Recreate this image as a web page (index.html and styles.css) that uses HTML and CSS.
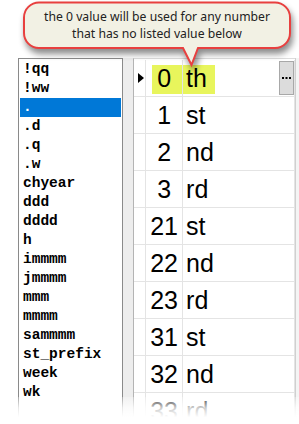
FILE: index.html
```html
<!DOCTYPE html>
<html lang="en">
<head>
  <meta charset="UTF-8">
  <title>Ordinal suffixes</title>
  <link rel="stylesheet" href="styles.css">
</head>
<body>
  <div class="shot">
    <div class="panes">
      <ul class="keys">
        <li>!qq</li>
        <li>!ww</li>
        <li class="selected">.</li>
        <li>.d</li>
        <li>.q</li>
        <li>.w</li>
        <li>chyear</li>
        <li>ddd</li>
        <li>dddd</li>
        <li>h</li>
        <li>immmm</li>
        <li>jmmmm</li>
        <li>mmm</li>
        <li>mmmm</li>
        <li>sammmm</li>
        <li>st_prefix</li>
        <li>week</li>
        <li>wk</li>
      </ul>
      <div class="splitter"></div>
      <div class="grid">
        <div class="row current">
          <div class="mark"></div>
          <div class="head"><span class="arrow"></span></div>
          <div class="num">0</div>
          <div class="val">th<span class="more"><svg width="9" height="2" viewBox="0 0 9 2"><rect x="0" y="0" width="2" height="2"/><rect x="3.5" y="0" width="2" height="2"/><rect x="7" y="0" width="2" height="2"/></svg></span></div>
        </div>
        <div class="row"><div class="head"></div><div class="num">1</div><div class="val">st</div></div>
        <div class="row"><div class="head"></div><div class="num">2</div><div class="val">nd</div></div>
        <div class="row"><div class="head"></div><div class="num">3</div><div class="val">rd</div></div>
        <div class="row"><div class="head"></div><div class="num">21</div><div class="val">st</div></div>
        <div class="row"><div class="head"></div><div class="num">22</div><div class="val">nd</div></div>
        <div class="row"><div class="head"></div><div class="num">23</div><div class="val">rd</div></div>
        <div class="row"><div class="head"></div><div class="num">31</div><div class="val">st</div></div>
        <div class="row"><div class="head"></div><div class="num">32</div><div class="val">nd</div></div>
        <div class="row"><div class="head"></div><div class="num">33</div><div class="val">rd</div></div>
      </div>
      <div class="edge"></div>
    </div>

    <div class="callout">
      <svg class="bubble" width="299" height="72" viewBox="0 0 299 72">
        <path d="M39,2.5 H275 A15,15 0 0 1 290,17.5 V33 A15,15 0 0 1 275,48 H198 L191.5,65 L183,48 H39 A15,15 0 0 1 24,33 V17.5 A15,15 0 0 1 39,2.5 Z"/>
      </svg>
      <p class="tip">the 0 value will be used for any number<br>that has no listed value below</p>
    </div>

    <div class="fade"></div>
  </div>
</body>
</html>
```

FILE: styles.css
```css
body { margin: 0; background: #fff; }
.shot { position: relative; width: 299px; height: 424px; overflow: hidden; background: #fff; }

.panes { display: flex; padding: 58px 0 0 18px; height: 366px; }

.keys { list-style: none; margin: 0; padding: 1px; width: 104px; border: 1px solid #8a8a8a; background: #fff;
  font-family: "Liberation Mono", monospace; font-weight: bold; font-size: 14.5px; color: #000; }
.keys li { height: 19px; line-height: 19px; padding-left: 3px; white-space: pre; }
.keys li.selected { background: #0078d7; color: #fff; }

.splitter { width: 10px; background: #ededed; }

.grid { width: 161px; padding-top: 1px; border-left: 1px solid #b4b4b4; border-top: 1px solid #dcdcdc; background: #fff;
  font-family: "Liberation Sans", Arial, sans-serif; font-size: 25px; color: #000; }
.row { position: relative; display: flex; height: 36px; border-bottom: 1px solid #e4e4e4; }
.row > div { display: flex; align-items: center; }
.head { width: 11px; border-right: 1px solid #e4e4e4; justify-content: center; }
.num { width: 36px; border-right: 1px solid #e4e4e4; justify-content: center; position: relative; z-index: 1; }
.val { width: 112px; box-sizing: border-box; border-right: 1px solid #e4e4e4; padding-left: 3px;
  justify-content: space-between; position: relative; z-index: 1; }

.arrow { width: 0; height: 0; border-left: 6px solid #000; border-top: 5.5px solid transparent; border-bottom: 5.5px solid transparent; margin-left: 2px; }

.mark { position: absolute; left: 18px; top: 5px; width: 63px; height: 29px; background: #e8f55c; z-index: 0; }

.more { display: flex; align-items: center; justify-content: center; width: 13px; height: 32px;
  background: #dcdcdc; border: 1px solid #a8a8a8; }
.more svg { fill: #000; }

.edge { width: 3px; border-left: 1px solid #d0d0d0; background: #f4f4f4; }

.callout { position: absolute; left: 0; top: 0; width: 299px; height: 72px; z-index: 5; }
.bubble { display: block; filter: drop-shadow(2px 5px 3px rgba(0,0,0,0.45)); }
.bubble path { fill: #f2f1e4; stroke: #e8403f; stroke-width: 2; }
.tip { position: absolute; left: 24px; top: 3px; width: 266px; height: 45px; margin: 0; display: flex; align-items: center; justify-content: center;
  text-align: center; font-family: "Noto Sans", "Open Sans", sans-serif; font-size: 12.2px; line-height: 16.5px; color: #222; }

.fade { position: absolute; left: 0; right: 0; bottom: 0; height: 27px; z-index: 6;
  background: linear-gradient(rgba(255,255,255,0.25), rgba(255,255,255,0.8) 40%, #fff 75%); }
```
